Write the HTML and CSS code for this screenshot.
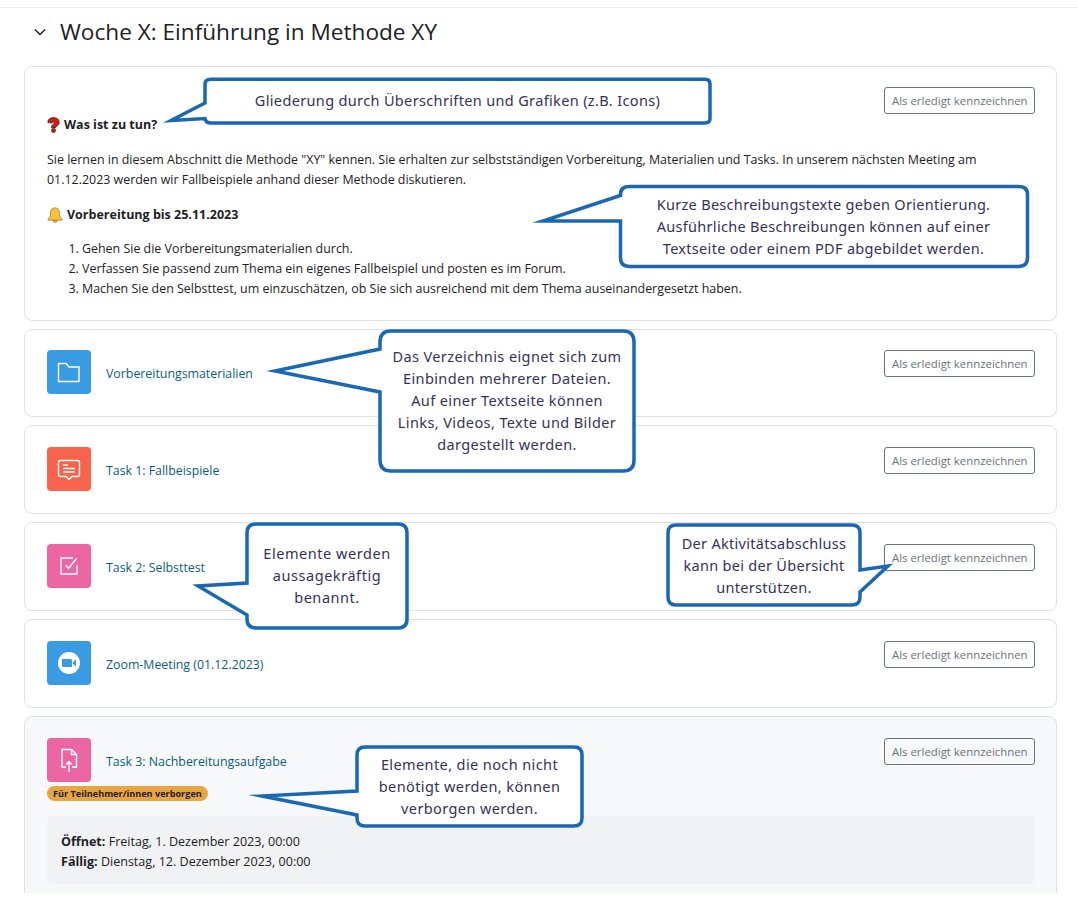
FILE: index.html
```html
<!DOCTYPE html>
<html lang="de">
<head>
<meta charset="utf-8">
<title>Woche X</title>
<link rel="stylesheet" href="styles.css">
</head>
<body>
<div class="page">
  <main class="section">
    <header class="section-head">
      <svg class="chevron" viewBox="0 0 14 14"><path d="M2 4.500 7 9.500 12 4.500"/></svg>
      <h2>Woche X: Einführung in Methode XY</h2>
    </header>

    <article class="card card-intro">
      <div class="actions"><button class="done">Als erledigt kennzeichnen</button></div>
      <div class="desc">
        <h5><svg class="emoji" viewBox="0 0 13 16"><path class="q" d="M.8 5.400C.8 2.400 3.300.6 6.500.6s5.700 1.700 5.700 4.600c0 2.400-1.500 3.300-2.800 4.200-.7.500-.9.900-.9 1.500H4.500c-.1-1.900.6-2.900 1.700-3.700.6-.4 1-.8 1-1.400 0-.6-.4-.9-1-.9-.7 0-1.100.5-1.100 1.300z"/><circle class="q" cx="6.500" cy="13.500" r="2"/></svg>Was ist zu tun?</h5>
        <p>Sie lernen in diesem Abschnitt die Methode "XY" kennen. Sie erhalten zur selbstständigen Vorbereitung, Materialien und Tasks. In unserem nächsten Meeting am<br>01.12.2023 werden wir Fallbeispiele anhand dieser Methode diskutieren.</p>
        <h5 class="second"><svg class="emoji bell" viewBox="0 0 16 16"><path d="M8 .8C5 .8 3.600 3.200 3.600 6c0 3.400-1.300 4.800-2.600 6.200-.4.500-.1 1 .5 1h13c.6 0 .9-.5.5-1C13.700 10.800 12.400 9.400 12.400 6 12.400 3.200 11 .8 8 .8z"/><path d="M6 13.400a2 2 0 0 0 4 0z"/></svg>Vorbereitung bis 25.11.2023</h5>
        <ol>
          <li>Gehen Sie die Vorbereitungsmaterialien durch.</li>
          <li>Verfassen Sie passend zum Thema ein eigenes Fallbeispiel und posten es im Forum.</li>
          <li>Machen Sie den Selbsttest, um einzuschätzen, ob Sie sich ausreichend mit dem Thema auseinandergesetzt haben.</li>
        </ol>
      </div>
    </article>

    <article class="card">
      <div class="row">
        <div class="activity">
          <span class="icon blue"><svg viewBox="0 0 24 24"><path d="M1.500 3.500h7.500l3 3.500h10v14.500h-20.500z"/></svg></span>
          <a href="#">Vorbereitungsmaterialien</a>
        </div>
        <button class="done">Als erledigt kennzeichnen</button>
      </div>
    </article>

    <article class="card">
      <div class="row">
        <div class="activity">
          <span class="icon red"><svg viewBox="0 0 24 24"><path d="M3.500 3.500h17a2 2 0 0 1 2 2v12a2 2 0 0 1-2 2h-5.500l-3 3-3-3h-5.500a2 2 0 0 1-2-2v-12a2 2 0 0 1 2-2z"/><path d="M6 8h5M6 11.500h12M6 15h12"/></svg></span>
          <a href="#">Task 1: Fallbeispiele</a>
        </div>
        <button class="done">Als erledigt kennzeichnen</button>
      </div>
    </article>

    <article class="card">
      <div class="row">
        <div class="activity">
          <span class="icon pink"><svg viewBox="0 0 24 24"><path d="M20 11v9H4V4h12"/><path d="M8.500 11l3 3.500 8-10"/></svg></span>
          <a href="#">Task 2: Selbsttest</a>
        </div>
        <button class="done">Als erledigt kennzeichnen</button>
      </div>
    </article>

    <article class="card">
      <div class="row">
        <div class="activity">
          <span class="icon blue"><svg class="solid" viewBox="0 0 24 24"><circle cx="12" cy="12" r="11"/><path class="cam" d="M5 8h8.500a1.500 1.500 0 0 1 1.500 1.500v6.500h-8.500a1.500 1.500 0 0 1-1.500-1.500zM16 11l3-2.500v7l-3-2.500z"/></svg></span>
          <a href="#">Zoom-Meeting (01.12.2023)</a>
        </div>
        <button class="done">Als erledigt kennzeichnen</button>
      </div>
    </article>

    <article class="card card-hidden">
      <div class="row">
        <div class="activity">
          <span class="icon pink"><svg viewBox="0 0 24 24"><path d="M9 19H5V1.500h9.500l5 5V19H15"/><path d="M14.500 1.500v5h5"/><path d="M12 24V13.500M9 16.500l3-3 3 3"/></svg></span>
          <a href="#">Task 3: Nachbereitungsaufgabe</a>
        </div>
        <button class="done">Als erledigt kennzeichnen</button>
      </div>
      <span class="badge">Für Teilnehmer/innen verborgen</span>
      <div class="dates">
        <div><strong>Öffnet:</strong> Freitag, 1. Dezember 2023, 00:00</div>
        <div><strong>Fällig:</strong> Dienstag, 12. Dezember 2023, 00:00</div>
      </div>
    </article>
  </main>

  <svg class="bubbles" viewBox="0 0 1078 900">
    <path d="M205 84Q205 79.500 211 79.300H705Q710 79.300 710 84V118.500Q710 123 705 123H211Q205.500 123 205 118.500L171 120.500 205 103Z"/>
    <path d="M620.500 195.500V194Q620.500 186.500 630 186.500H1018Q1027.500 186.500 1027.500 194V258Q1027.500 266.500 1018 266.500H630Q620.500 266.500 620.500 258V221H543L620.500 195.500Z"/>
    <path d="M380 349V342Q380 331 391 331H623Q634 331 634 342V460Q634 471 623 471H391Q380 471 380 460V392L275 371Z"/>
    <path d="M247 583V533Q247 524 256 524H398Q407 524 407 533V619Q407 628 398 628H256Q247 628 247 619V615L198 586Z"/>
    <path d="M668 533Q668 525 676 525H852Q860 525 860 533V570L888 566 860 592V597Q860 605 852 605H676Q668 605 668 597Z"/>
    <path d="M357 791V755Q357 747 365 747H574Q582 747 582 755V818Q582 826 574 826H365Q357 826 357 818V815L262 796Z"/>
  </svg>
  <div class="note n1">Gliederung durch Überschriften und Grafiken (z.B. Icons)</div>
  <div class="note n2">Kurze Beschreibungstexte geben Orientierung.<br>Ausführliche Beschreibungen können auf einer<br>Textseite oder einem PDF abgebildet werden.</div>
  <div class="note n3">Das Verzeichnis eignet sich zum<br>Einbinden mehrerer Dateien.<br>Auf einer Textseite können<br>Links, Videos, Texte und Bilder<br>dargestellt werden.</div>
  <div class="note n4">Elemente werden<br>aussagekräftig<br>benannt.</div>
  <div class="note n5">Der Aktivitätsabschluss<br>kann bei der Übersicht<br>unterstützen.</div>
  <div class="note n6">Elemente, die noch nicht<br>benötigt werden, können<br>verborgen werden.</div>
</div>
</body>
</html>
```
FILE: styles.css
```css
* { box-sizing: border-box; }
html, body { margin: 0; padding: 0; background: #fff; }
body { font-family: "Open Sans", "Noto Sans", sans-serif; font-size: 12.430px; line-height: 20px; color: #1d2125; }
.page { position: relative; width: 1078px; height: 900px; overflow: hidden; }
.section { height: 893px; overflow: hidden; padding: 7px 21px 0 24px; }
.section-head { display: flex; align-items: center; height: 59px; margin: 0 -21px 0 -24px; padding: 0 0 11px 33px; border-top: 1px solid #eff0f1; }
.chevron { width: 14px; height: 14px; fill: none; stroke: #1d2125; stroke-width: 1.500; margin-right: 13px; }
h2 { margin: 0; font-size: 22.600px; line-height: 30px; font-weight: 400; color: #1d2125; }
.card { border: 1px solid #dee2e6; border-radius: 8px; padding: 20.600px 21px 0 22px; margin-bottom: 8px; height: 88.800px; background: #fff; }
.card-intro { height: 254.600px; padding-top: 20px; }
.card-hidden { background: #f7f8fa; height: 200px; padding-top: 21.200px; }
.actions { display: flex; justify-content: flex-end; height: 27px; margin-bottom: 1px; }
.row { display: flex; justify-content: space-between; align-items: flex-start; }
.activity { display: flex; align-items: center; gap: 15px; }
.activity a { color: #0b5d80; text-decoration: none; font-size: 12.350px; padding-top: 4px; }
.icon { display: flex; align-items: center; justify-content: center; width: 44px; height: 44px; border-radius: 4px; }
.icon svg { width: 24px; height: 24px; fill: none; stroke: #fff; stroke-width: 1.400; overflow: visible; }
.icon svg.solid { fill: #fff; stroke: none; }
.icon .cam { fill: #399be2; }
.blue { background: #399be2; }
.red { background: #f7634d; }
.pink { background: #eb66a2; }
.done { font: inherit; font-size: 11.400px; line-height: 25px; height: 27px; padding: 0 7px; width: 151px; color: #6a737b; background: transparent; border: 1px solid #6a737b; border-radius: 3px; white-space: nowrap; }
h5 { margin: 0; font-size: 12.500px; line-height: 20px; font-weight: 700; display: flex; align-items: center; height: 20px; }
.desc p { margin: 15px 0; white-space: nowrap; }
.emoji { width: 13px; height: 16px; margin-right: 4px; flex: none; }
.q { fill: #c8201a; stroke: #4d130f; stroke-width: .7; }
.bell { width: 16px; height: 16px; margin-right: 4px; }
.bell path { fill: #f9c33c; stroke: #8a6412; stroke-width: .6; }
ol { margin: 14px 0 0; padding-left: 35px; }
.badge { display: inline-block; margin-top: 4px; padding: 0 6px; height: 15px; line-height: 15px; font-size: 9.150px; font-weight: 700; border-radius: 8px; background: #e8a544; color: #1d2125; white-space: nowrap; }
.dates { margin-top: 13px; padding: 16px 14px; height: 68px; background: #f1f2f4; border-radius: 6px; font-size: 12.550px; }
strong { font-weight: 700; }
.bubbles { position: absolute; left: 0; top: 0; width: 1078px; height: 900px; pointer-events: none; }
.bubbles path { fill: #fff; stroke: #1a68b3; stroke-width: 3.500; stroke-linejoin: miter; stroke-miterlimit: 12; }
.note { position: absolute; display: flex; align-items: center; justify-content: center; text-align: center; font-family: "Noto Sans", sans-serif; font-size: 14.500px; letter-spacing: .3px; line-height: 22px; color: #35325a; white-space: nowrap; }
.n1 { left: 205px; top: 78px; width: 505px; height: 44px; letter-spacing: .35px; }
.n2 { left: 620px; top: 185px; width: 407px; height: 81px; }
.n3 { left: 380px; top: 330px; width: 254px; height: 140px; letter-spacing: .4px; }
.n4 { left: 247px; top: 523px; width: 160px; height: 104px; letter-spacing: .55px; }
.n5 { left: 668px; top: 525px; width: 192px; height: 80px; }
.n6 { left: 357px; top: 746px; width: 225px; height: 79px; letter-spacing: .4px; }
```
